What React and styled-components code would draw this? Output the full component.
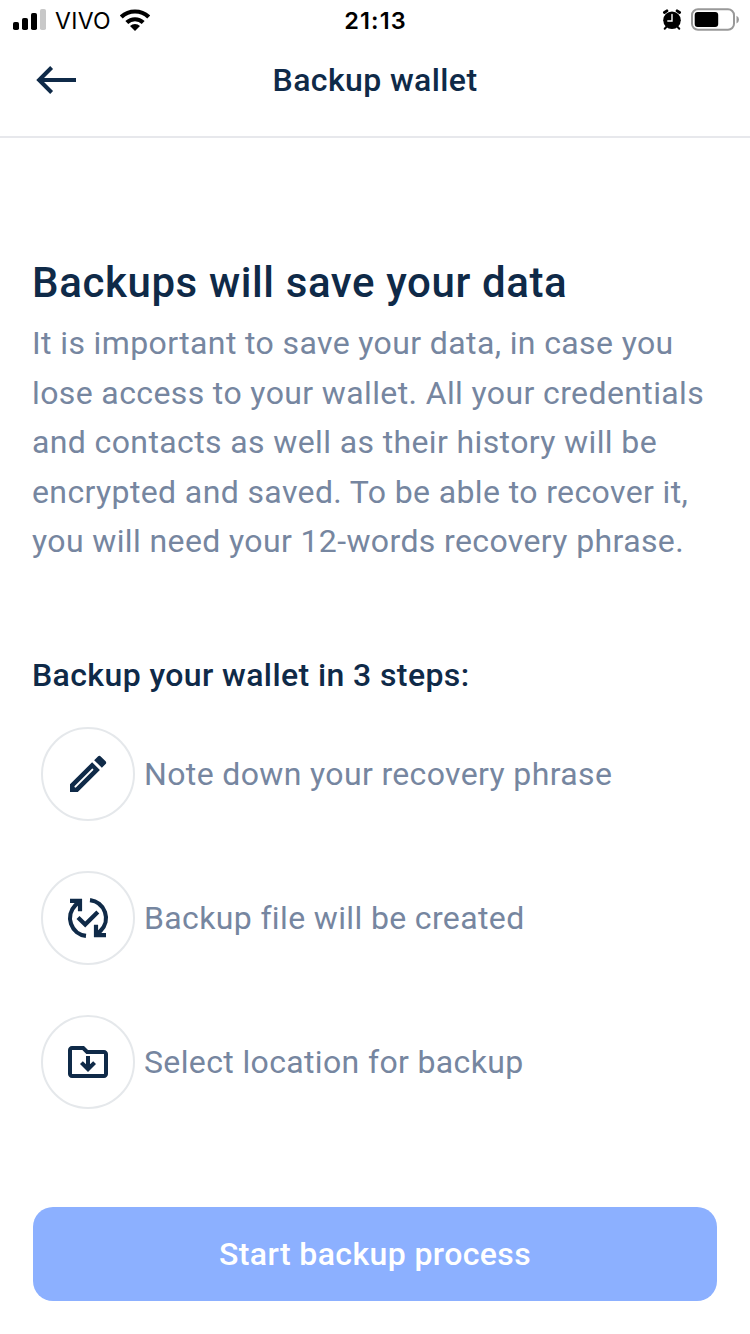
import React from "react";
import styled, { createGlobalStyle } from "styled-components";

const Global = createGlobalStyle`
  * { box-sizing: border-box; }
  body { margin: 0; background: #fff; font-family: Roboto, sans-serif; }
  h1, h2, p { margin: 0; }
`;
const Screen = styled.div`
  width: 750px; height: 1334px; display: flex; flex-direction: column; background: #fff; overflow: hidden;
`;
const StatusBar = styled.div`
  height: 40px; display: grid; grid-template-columns: 1fr auto 1fr; align-items: center;
  padding: 0 11px 0 12px; color: #000; font-family: Inter, sans-serif;
`;
const StatusGroup = styled.div`
  display: flex; align-items: center; gap: ${(p) => p.$gap}px; justify-content: ${(p) => (p.$end ? "flex-end" : "flex-start")};
`;
const Carrier = styled.span`
  font-size: 23px; line-height: 38px; padding-top: 2px; letter-spacing: 0.3px;
`;
const Time = styled.span`
  font-size: 23.5px; line-height: 38px; padding-top: 2px; font-weight: 600; letter-spacing: 1.1px;
`;
const Header = styled.header`
  height: 98px; border-bottom: 2px solid #e7e8ec; display: grid; grid-template-columns: 150px 1fr 150px;
  padding-bottom: 16px; align-items: center;
`;
const BackButton = styled.button`
  border: 0; background: none; padding: 0 0 0 36px; display: flex;
`;
const Title = styled.h1`
  font-size: 32px; font-weight: 500; letter-spacing: 0.4px; color: #0f2a48; text-align: center; white-space: nowrap;
`;
const Content = styled.main`padding: 118px 32px 0; display: flex; flex-direction: column;`;
const Headline = styled.h2`
  font-size: 42px; line-height: 54px; font-weight: 500; letter-spacing: 0.61px; color: #0f2a48; white-space: nowrap;
`;
const Copy = styled.p`
  margin-top: 9px; font-size: 32px; line-height: 49.5px; letter-spacing: 0.38px; color: #7686a0; white-space: nowrap;
`;
const Subhead = styled.h2`
  margin-top: 88px; font-size: 32px; line-height: 40px; font-weight: 500; letter-spacing: 0.4px; color: #0f2a48;
`;
const Steps = styled.div`margin: 32px 0 0 9px; display: flex; flex-direction: column; gap: 50px;`;
const Step = styled.div`display: flex; align-items: center; gap: 9px; height: 94px;`;
const Circle = styled.div`
  width: 94px; height: 94px; border: 2px solid #e5e8eb; border-radius: 50%; display: flex; align-items: center; justify-content: center;
`;
const StepLabel = styled.span`font-size: 32px; letter-spacing: 0.36px; color: #7686a0;`;
const Start = styled.button`
  margin: 98px 1px 0; height: 94px; border: 0; border-radius: 20px; background: #8cb0ff; color: #fff;
  font: 500 32px Roboto, sans-serif; letter-spacing: 0.4px;
`;

const Icon = ({ children }) => (
  <svg width="48" height="48" viewBox="0 0 24 24" fill="#0f2a48">{children}</svg>
);
const Pencil = () => (
  <Icon>
    <path d="M17.66 2.9c-.25 0-.51.1-.7.29l-1.88 1.88 3.85 3.85 1.88-1.88c.39-.39.39-1.02 0-1.41l-2.44-2.44c-.2-.2-.45-.29-.71-.29M14.06 6.1 3 17.16V21h3.9L17.95 9.99z" />
    <path d="M5.7 18.3 14.2 9.8" fill="none" stroke="#fff" strokeWidth="1" strokeLinecap="round" />
  </Icon>
);
const SyncCheck = () => (
  <Icon>
    <g fill="none" stroke="#0f2a48" strokeWidth="2.1">
      <path d="M11 20.95A9 9 0 0 1 5.7 5.6L8 3.4M13 3.05A9 9 0 0 1 18.3 18.4L16 20.6" />
      <path d="M3 3.4h5v5.2M21 20.6h-5v-5.2M7 11.7l3.6 3.6 6.3-6.3" />
    </g>
  </Icon>
);
const FolderDown = () => (
  <Icon>
    <path d="M20 6h-8l-2-2H4c-1.1 0-2 .9-2 2v12c0 1.1.9 2 2 2h16c1.1 0 2-.9 2-2V8c0-1.1-.9-2-2-2m0 12H4V6h5.17l2 2H20zm-9-9v4.17l-1.59-1.58L8 13l4 4 4-4-1.41-1.41L13 13.17V9z" />
  </Icon>
);
const steps = [
  ["Note down your recovery phrase", Pencil],
  ["Backup file will be created", SyncCheck],
  ["Select location for backup", FolderDown],
];

export default function App() {
  return (
    <Screen>
      <Global />
      <StatusBar>
        <StatusGroup $gap={9}>
          <svg width="34" height="22" viewBox="0 0 34 22">
            <rect x="1" y="13" width="6" height="8" rx="1.8" />
            <rect x="10" y="9" width="6" height="12" rx="1.8" />
            <rect x="19" y="4" width="6" height="17" rx="1.8" />
            <rect x="28" y="0" width="6" height="21" rx="1.8" fill="#c8c8c8" />
          </svg>
          <Carrier>VIVO</Carrier>
          <svg width="30" height="22" viewBox="0 0 30 22" fill="none" stroke="#000" strokeWidth="4.2">
            <path d="M1.3 8a19.8 19.8 0 0 1 27.4 0M6.8 13.5a12 12 0 0 1 16.4 0" />
            <path d="M15 22l-5-5a7.4 7.4 0 0 1 10 0z" fill="#000" stroke="none" />
          </svg>
        </StatusGroup>
        <Time>21:13</Time>
        <StatusGroup $gap={9} $end>
          <svg width="20" height="22" viewBox="0 0 20 22" fill="none" stroke="#000" strokeLinecap="round">
            <circle cx="10" cy="11.2" r="8.8" fill="#000" stroke="none" />
            <path d="M2.4 3.5l2.5-1.7M17.6 3.5l-2.5-1.7" strokeWidth="2.8" />
            <path d="M4.3 18l-1.6 1.7M15.7 18l1.6 1.7" strokeWidth="2" />
            <path d="M10 5.4v6.6H5.8" stroke="#fff" strokeWidth="1.4" />
          </svg>
          <svg width="48" height="24" viewBox="0 0 48 24">
            <rect x="1" y="1.3" width="42" height="20.5" rx="6" fill="none" stroke="#999" strokeWidth="2" />
            <rect x="3.7" y="4" width="23.5" height="15" rx="3" />
            <path d="M45.5 7.8q2.5 1 2.5 3.8t-2.5 3.8z" fill="#999" />
          </svg>
        </StatusGroup>
      </StatusBar>
      <Header>
        <BackButton aria-label="Back">
          <svg width="40" height="28" viewBox="0 0 40 28" fill="none" stroke="#0f2a48" strokeWidth="4">
            <path d="M40 14H3M15.6 1.5L3.1 14l12.5 12.5" />
          </svg>
        </BackButton>
        <Title>Backup wallet</Title>
      </Header>
      <Content>
        <Headline>Backups will save your data</Headline>
        <Copy>
          It is important to save your data, in case you<br />
          lose access to your wallet. All your credentials<br />
          and contacts as well as their history will be<br />
          encrypted and saved. To be able to recover it,<br />
          you will need your 12-words recovery phrase.
        </Copy>
        <Subhead>Backup your wallet in 3 steps:</Subhead>
        <Steps>
          {steps.map(([label, Glyph]) => (
            <Step key={label}><Circle><Glyph /></Circle><StepLabel>{label}</StepLabel></Step>
          ))}
        </Steps>
        <Start>Start backup process</Start>
      </Content>
    </Screen>
  );
}
